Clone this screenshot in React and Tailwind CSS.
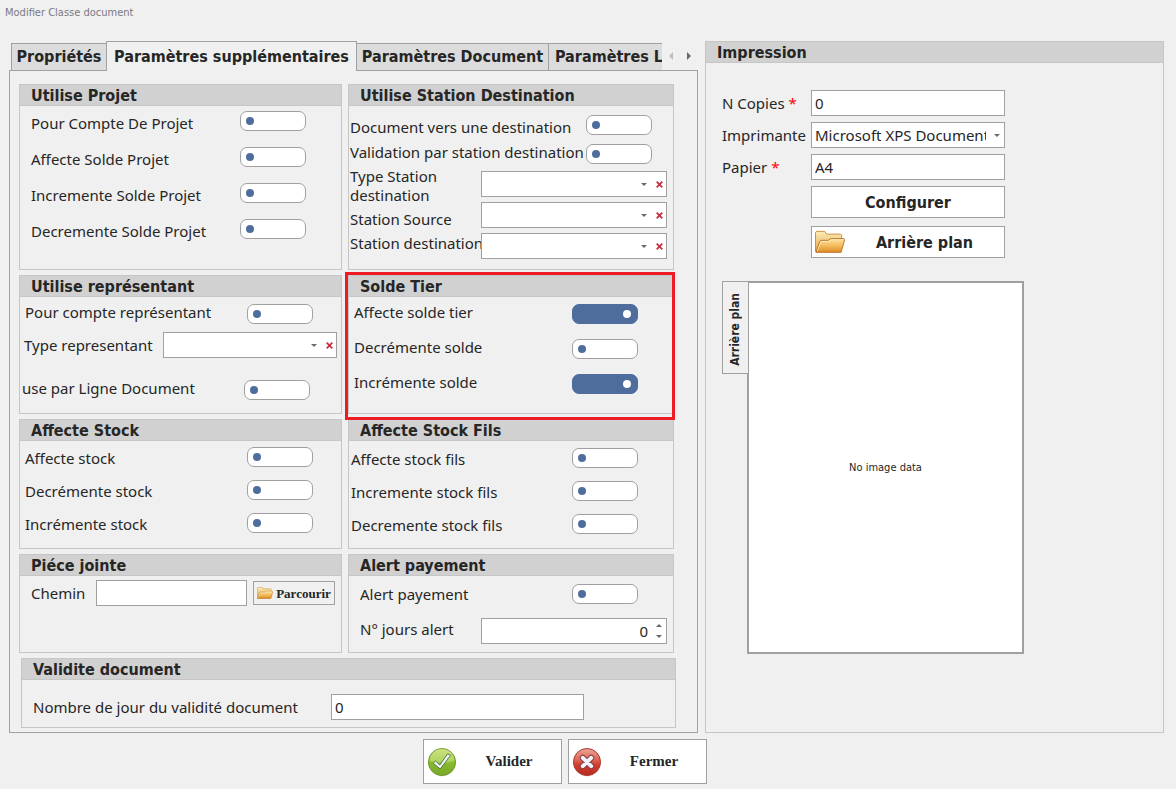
import { useId } from "react";

const CONTROL = "border border-[#a0a0a0] bg-white rounded-none outline-none";
const BOLD = "font-['DejaVu_Sans_Condensed','DejaVu_Sans',sans-serif] text-[16px] font-bold";
const SMALL = "font-['DejaVu_Sans_Condensed','DejaVu_Sans',sans-serif] text-[11px]";

function Toggle({ id, on = false }) {
  return (
    <input
      id={id}
      type="checkbox"
      role="switch"
      defaultChecked={on}
      className="flex h-5 w-[66px] shrink-0 appearance-none items-center justify-start rounded-[7px] border border-[#a0a0a0] bg-white px-[5px] before:size-2 before:rounded-full before:bg-[#4f6d9c] before:content-[''] checked:justify-end checked:border-[#4f6d9c] checked:bg-[#4f6d9c] checked:px-[6px] checked:before:bg-white"
    />
  );
}

function ToggleRow({ label, on, className = "", labelClass = "" }) {
  const id = useId();
  return (
    <div className={`flex h-5 items-center justify-between ${className}`}>
      <label htmlFor={id} className={`whitespace-nowrap ${labelClass}`}>
        {label}
      </label>
      <Toggle id={id} on={on} />
    </div>
  );
}

function Group({ title, className = "", bodyClass = "", children }) {
  return (
    <section className={`min-w-0 border border-[#c6c6c6] ${className}`}>
      <h2 className={`h-[21px] border-b border-[#c6c6c6] bg-[#d1d1d1] pl-[11px] leading-[21px] ${BOLD}`}>
        {title}
      </h2>
      <div className={`flex flex-col ${bodyClass}`}>{children}</div>
    </section>
  );
}

function CaretDown() {
  return (
    <svg viewBox="0 0 6 3" className="h-[3px] w-[6px]" aria-hidden="true">
      <path d="M0 0h6L3 3z" fill="#6a6a6a" />
    </svg>
  );
}

function ClearableSelect({ id, className = "" }) {
  return (
    <div className={`relative min-w-0 ${className}`}>
      <select id={id} className={`block h-[26px] w-full appearance-none pl-1 pr-10 ${CONTROL}`}>
        <option></option>
      </select>
      <span className="pointer-events-none absolute inset-y-0 right-5 flex items-center">
        <CaretDown />
      </span>
      <button type="button" aria-label="Effacer" className="absolute inset-y-0 right-1 flex w-2 items-center justify-center">
        <svg viewBox="0 0 7 7" className="size-[7px]" aria-hidden="true">
          <path d="M0.700 0.700l5.600 5.600M6.300 0.700L0.700 6.300" stroke="#cc2b3d" strokeWidth="1.700" fill="none" />
        </svg>
      </button>
    </div>
  );
}

function Folder({ className }) {
  return (
    <svg viewBox="0 0 32 24" className={className} aria-hidden="true">
      <defs>
        <linearGradient id="folderBack" x1="0" y1="0" x2="0" y2="1">
          <stop offset="0" stopColor="#fdeeb8" />
          <stop offset="1" stopColor="#e2a548" />
        </linearGradient>
        <linearGradient id="folderFront" x1="0" y1="0" x2="0" y2="1">
          <stop offset="0" stopColor="#fde3a0" />
          <stop offset="0.5" stopColor="#f3bd5e" />
          <stop offset="1" stopColor="#dd8a26" />
        </linearGradient>
      </defs>
      <path d="M0.500 22V2L1.800.6h8.600l2 3h15l1 1V10L23 22z" fill="url(#folderBack)" stroke="#c98a35" />
      <path d="M1 23L5 11.400l1.400-1.200h7.800l3-1.800h13.800l.6 1-3.800 13.600z" fill="url(#folderFront)" stroke="#bd6f22" />
      <path d="M2.400 21.800l3.700-9.600.8-.8h7.600l3-1.800h13" fill="none" stroke="#fff3cf" strokeWidth="0.800" />
    </svg>
  );
}

function CheckBadge() {
  return (
    <svg viewBox="0 0 30 30" className="size-[30px]" aria-hidden="true">
      <defs>
        <linearGradient id="okFill" x1="0" y1="0" x2="0" y2="1">
          <stop offset="0" stopColor="#c3dc62" />
          <stop offset="0.450" stopColor="#9fcb3c" />
          <stop offset="0.550" stopColor="#86b92d" />
          <stop offset="1" stopColor="#78a82a" />
        </linearGradient>
      </defs>
      <circle cx="15" cy="15.400" r="14" fill="#d9dcd2" />
      <circle cx="15" cy="15" r="13.500" fill="url(#okFill)" stroke="#6c9926" />
      <path d="M3 13.500a12 11.500 0 0 1 24-1C21 17.500 12 17 3 13.500z" fill="#fff" opacity="0.200" />
      <path d="M6.200 16.200l2.400-2.200 4.200 4L20.600 6.800l3 1.600L13.200 22z" fill="#eef2fb" stroke="#4d6c33" strokeWidth="0.900" strokeLinejoin="round" />
    </svg>
  );
}

function CrossBadge() {
  return (
    <svg viewBox="0 0 30 30" className="size-[30px]" aria-hidden="true">
      <defs>
        <linearGradient id="noFill" x1="0" y1="0" x2="0" y2="1">
          <stop offset="0" stopColor="#eda79a" />
          <stop offset="0.450" stopColor="#d9604f" />
          <stop offset="0.600" stopColor="#cf3f30" />
          <stop offset="1" stopColor="#b52a20" />
        </linearGradient>
      </defs>
      <circle cx="15" cy="15.400" r="14" fill="#dcd3d2" />
      <circle cx="15" cy="15" r="13.500" fill="url(#noFill)" stroke="#b0382e" />
      <path d="M10.800 10.800l8.400 8.400M19.200 10.800l-8.400 8.400" fill="none" stroke="#8c3a3c" strokeWidth="6" strokeLinecap="round" />
      <path d="M10.800 10.800l8.400 8.400M19.200 10.800l-8.400 8.400" fill="none" stroke="#eef2fb" strokeWidth="4" strokeLinecap="round" />
    </svg>
  );
}

function Tabs() {
  return (
    <div className="relative z-10 -mb-px flex h-[30px] items-end pl-[2px]">
      <div role="tablist" className={`flex min-w-0 flex-[0_1_651px] items-end overflow-hidden leading-5 ${BOLD}`}>
        <button type="button" role="tab" className="h-7 w-[95px] shrink-0 whitespace-nowrap border border-r-0 border-[#a0a0a0] bg-[#dcdcdc] text-center">
          Propriétés
        </button>
        <button type="button" role="tab" aria-selected="true" className="h-[30px] w-[251px] shrink-0 whitespace-nowrap border border-b-0 border-[#a0a0a0] bg-[#f0f0f0] text-center">
          Paramètres supplémentaires
        </button>
        <button type="button" role="tab" className="h-7 w-[192px] shrink-0 whitespace-nowrap border border-l-0 border-[#a0a0a0] bg-[#dcdcdc] text-center">
          Paramètres Document
        </button>
        <button type="button" role="tab" className="h-7 w-[192px] shrink-0 whitespace-nowrap border border-l-0 border-[#a0a0a0] bg-[#dcdcdc] pl-[6px] text-left">
          Paramètres Ligne
        </button>
      </div>
      <div className="flex h-[30px] items-center gap-[14px] pl-[7px]">
        <button type="button" aria-label="Onglets précédents">
          <svg viewBox="0 0 4 8" className="h-2 w-1" aria-hidden="true">
            <path d="M4 0v8L0 4z" fill="#bdbdbd" />
          </svg>
        </button>
        <button type="button" aria-label="Onglets suivants">
          <svg viewBox="0 0 4 8" className="h-2 w-1" aria-hidden="true">
            <path d="M0 0v8l4-4z" fill="#6a6a6a" />
          </svg>
        </button>
      </div>
    </div>
  );
}

function PrintField({ label, required, children, id }) {
  return (
    <div className="flex items-center">
      <label htmlFor={id} className="w-[89px] shrink-0 whitespace-nowrap">
        {label}
        {required && <span className="text-[#ff0000]"> *</span>}
      </label>
      <div className="w-[194px]">{children}</div>
    </div>
  );
}

export default function App() {
  return (
    <form className="flex min-h-screen flex-col bg-[#f0f0f0] font-['Noto_Sans',sans-serif] text-[15px] leading-[19px] text-[#262626]">
      <h1 className={`pb-5 pl-[5px] pt-[5px] leading-4 text-[#7a7a82] ${SMALL}`}>Modifier Classe document</h1>

      <main className="grid grid-cols-[689fr_459fr] gap-[7px] pl-[9px] pr-3">
        <div className="min-w-0">
          <Tabs />
          <div className="border border-[#a0a0a0] pb-1 pl-[9px] pr-[23px] pt-[13px]">
            <div className="grid grid-cols-[323fr_326fr] gap-x-[6px] gap-y-[5px]">
              <Group title="Utilise Projet" bodyClass="gap-4 pb-[30px] pl-[11px] pr-[35px] pt-[5px]">
                <ToggleRow label="Pour Compte De Projet" labelClass="pt-1" />
                <ToggleRow label="Affecte Solde Projet" labelClass="pt-1" />
                <ToggleRow label="Incremente Solde Projet" labelClass="pt-1" />
                <ToggleRow label="Decremente Solde Projet" labelClass="pt-1" />
              </Group>

              <Group title="Utilise Station Destination" bodyClass="gap-[9px] pl-px pt-[9px]">
                <ToggleRow label="Document vers une destination" className="pr-[21px]" labelClass="pt-1" />
                <ToggleRow label="Validation par station destination" className="pr-[21px]" labelClass="pb-1" />
                <div className="-mt-[2px] flex justify-between pr-[6px]">
                  <div className="-mt-1 flex w-[131px] flex-col gap-[5px] whitespace-nowrap">
                    <label htmlFor="type-station">
                      Type Station
                      <br />
                      destination
                    </label>
                    <label htmlFor="station-source">Station Source</label>
                    <label htmlFor="station-destination">Station destination</label>
                  </div>
                  <div className="flex flex-1 flex-col gap-[5px]">
                    <ClearableSelect id="type-station" />
                    <ClearableSelect id="station-source" />
                    <ClearableSelect id="station-destination" />
                  </div>
                </div>
              </Group>

              <Group title="Utilise représentant" bodyClass="pb-[13px] pt-[7px]">
                <ToggleRow label="Pour compte représentant" className="pl-[5px] pr-7" labelClass="pb-1" />
                <div className="mt-2 flex items-center pl-[4px] pr-1">
                  <label htmlFor="type-representant" className="w-[139px] whitespace-nowrap">
                    Type representant
                  </label>
                  <ClearableSelect id="type-representant" className="flex-1" />
                </div>
                <ToggleRow label="use par Ligne Document" className="mt-[22px] pl-[2px] pr-[31px]" labelClass="pb-1" />
              </Group>

              <Group title="Solde Tier" className="relative" bodyClass="gap-[15px] pl-[5px] pr-[35px] pt-[7px]">
                <ToggleRow label="Affecte solde tier" on labelClass="pb-1" />
                <ToggleRow label="Decrémente solde" labelClass="pb-1" />
                <ToggleRow label="Incrémente solde" on labelClass="pb-1" />
                <span className="pointer-events-none absolute -bottom-[7px] -left-1 -right-[2px] -top-1 border-[3px] border-[#ed1c24]" />
              </Group>

              <Group title="Affecte Stock" bodyClass="gap-[13px] pb-[15px] pl-[5px] pr-7 pt-[6px]">
                <ToggleRow label="Affecte stock" labelClass="pt-[2px]" />
                <ToggleRow label="Decrémente stock" labelClass="pt-[2px]" />
                <ToggleRow label="Incrémente stock" labelClass="pt-[2px]" />
              </Group>

              <Group title="Affecte Stock Fils" bodyClass="gap-[13px] pl-[2px] pr-[35px] pt-[7px]">
                <ToggleRow label="Affecte stock fils" labelClass="pt-[2px]" />
                <ToggleRow label="Incremente stock fils" labelClass="pt-[2px]" />
                <ToggleRow label="Decremente stock fils" labelClass="pt-[2px]" />
              </Group>

              <Group title="Piéce jointe" bodyClass="pt-1">
                <div className="flex items-center pl-[11px] pr-[6px]">
                  <label htmlFor="chemin" className="w-[65px]">
                    Chemin
                  </label>
                  <input id="chemin" type="text" className={`mr-[6px] h-[26px] min-w-0 flex-1 px-1 ${CONTROL}`} />
                  <button type="button" className="flex h-6 w-[82px] items-center justify-center gap-[3px] border border-[#a0a0a0] font-['Liberation_Serif',serif] text-[13px] font-bold">
                    <Folder className="h-3 w-4" />
                    Parcourir
                  </button>
                </div>
              </Group>

              <Group title="Alert payement" bodyClass="gap-[14px] pb-2 pl-[11px] pt-2">
                <ToggleRow label="Alert payement" className="pr-[35px]" />
                <div className="flex items-center justify-between pr-[6px]">
                  <label htmlFor="jours-alert" className="pb-1">
                    N° jours alert
                  </label>
                  <div className="relative w-[186px]">
                    <input id="jours-alert" type="text" inputMode="numeric" defaultValue="0" className={`block h-[26px] w-full pr-[18px] text-right ${CONTROL}`} />
                    <div className="absolute inset-y-0 right-[5px] flex flex-col justify-between py-[6px]">
                      <button type="button" aria-label="Augmenter" className="flex rotate-180">
                        <CaretDown />
                      </button>
                      <button type="button" aria-label="Diminuer" className="flex">
                        <CaretDown />
                      </button>
                    </div>
                  </div>
                </div>
              </Group>

              <Group title="Validite document" className="col-span-2 -mr-[2px] ml-[2px]" bodyClass="pb-[7px] pt-[14px]">
                <div className="flex items-center pl-[11px]">
                  <label htmlFor="jours-validite" className="w-[298px] whitespace-nowrap">
                    Nombre de jour du validité document
                  </label>
                  <input id="jours-validite" type="text" defaultValue="0" className={`h-[26px] w-[253px] px-[3px] ${CONTROL}`} />
                </div>
              </Group>
            </div>
          </div>
        </div>

        <Group title="Impression" bodyClass="gap-[6px] pl-4 pt-[27px]">
          <PrintField id="copies" label="N Copies" required>
            <input id="copies" type="text" defaultValue="0" className={`block h-[26px] w-full px-[3px] ${CONTROL}`} />
          </PrintField>
          <PrintField id="imprimante" label="Imprimante">
            <div className="relative">
              <select id="imprimante" className={`block h-[26px] w-full appearance-none pl-[3px] pr-[18px] ${CONTROL}`}>
                <option>Microsoft XPS Document Writer</option>
              </select>
              <span className="pointer-events-none absolute inset-y-0 right-[5px] flex items-center">
                <CaretDown />
              </span>
            </div>
          </PrintField>
          <PrintField id="papier" label="Papier" required>
            <input id="papier" type="text" defaultValue="A4" className={`block h-[26px] w-full px-[3px] ${CONTROL}`} />
          </PrintField>
          <div className="flex w-[283px] flex-col gap-2 pl-[89px]">
            <button type="button" className={`h-8 ${BOLD} ${CONTROL}`}>
              Configurer
            </button>
            <button type="button" className={`flex h-8 items-center pl-[3px] ${BOLD} ${CONTROL}`}>
              <Folder className="h-6 w-[30px]" />
              <span className="flex-1">Arrière plan</span>
            </button>
          </div>
          <div className="mt-[17px] flex items-start">
            <button type="button" role="tab" aria-selected="true" className="relative -mr-[2px] flex h-[93px] w-[27px] items-center justify-center border border-[#a0a0a0] bg-[#f0f0f0] pr-[2px] pt-1 font-['DejaVu_Sans_Condensed','DejaVu_Sans',sans-serif] text-[12px] font-bold leading-4">
              <span className="rotate-180 whitespace-nowrap [writing-mode:vertical-rl]">Arrière plan</span>
            </button>
            <div className={`flex h-[373px] w-[277px] items-center justify-center border-2 border-[#a0a0a0] bg-white ${SMALL}`}>
              No image data
            </div>
          </div>
        </Group>
      </main>

      <footer className="flex justify-center gap-[6px] pb-[5px] pl-[423px] pr-[469px] pt-[6px] font-['Liberation_Serif',serif] text-[15px] font-bold">
        <button type="submit" className={`flex h-[45px] w-[139px] shrink-0 items-center pl-[3px] ${CONTROL}`}>
          <CheckBadge />
          <span className="flex-1">Valider</span>
        </button>
        <button type="button" className={`flex h-[45px] w-[139px] shrink-0 items-center pl-[3px] ${CONTROL}`}>
          <CrossBadge />
          <span className="flex-1">Fermer</span>
        </button>
      </footer>
    </form>
  );
}
